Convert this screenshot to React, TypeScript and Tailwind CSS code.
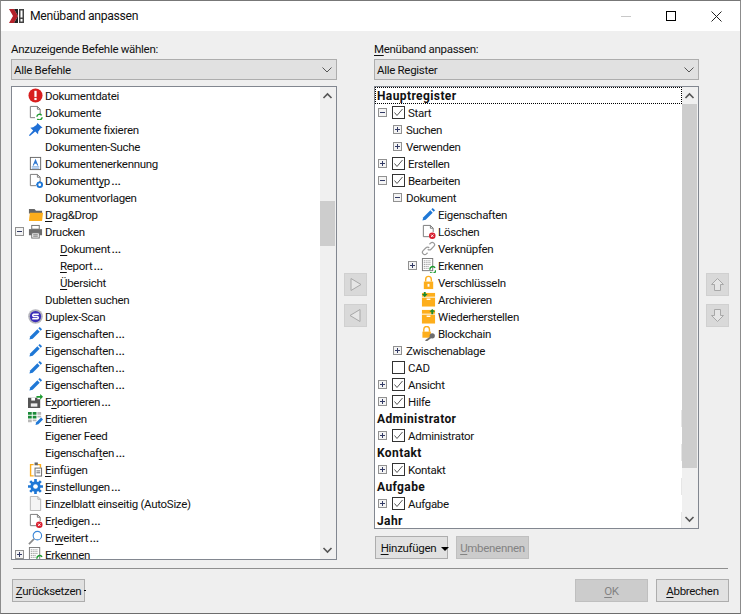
import type { ReactNode } from "react";

type IconName =
  | "error" | "docSync" | "pin" | "docA" | "docGear" | "folder" | "printer" | "scan"
  | "pencil" | "export" | "grid" | "paste" | "gear" | "page" | "docDel" | "search"
  | "gridSync" | "link" | "lock" | "boxIn" | "boxOut" | "lockKey";

// kleine Icons, von Hand nachgezeichnet
function Icon({ name }: { name: IconName }) {
  const shapes: Record<IconName, ReactNode> = {
    error: (
      <>
        <circle cx="8" cy="8" r="7.500" fill="#d81e1e" />
        <rect x="6.800" y="3" width="2.400" height="6.500" fill="#fff" />
        <rect x="6.800" y="10.500" width="2.400" height="2.400" fill="#fff" />
      </>
    ),
    docSync: (
      <>
        <path d="M2.500 1.500h7.500l3 3v5M2.500 1.500v12h5" fill="none" stroke="#777" />
        <path d="M10 1.500v3h3" fill="none" stroke="#777" />
        <path d="M9.500 12.500a2.800 2.800 0 0 1 5-1.500M15 13a2.800 2.800 0 0 1-5 1.800" fill="none" stroke="#1c9a2e" strokeWidth="1.500" />
      </>
    ),
    pin: <path d="M10 1l5.500 5-2 .6-2.500 3.400-.3 3-3-3L2 15l-1-1 4.500-5-3-3 3-.3 3.500-2.500z" fill="#1f6fd6" />,
    docA: (
      <>
        <rect x="2.500" y="1.500" width="11" height="13" fill="#fff" stroke="#666" />
        <path d="M8 3l3 7H9.700L9 8.300H7L6.300 10H5z" fill="#2f78d0" />
        <path d="M4 11.500h8M4 13h8" stroke="#7aa6dc" />
      </>
    ),
    docGear: (
      <>
        <path d="M2.500 1.500h7.500l3 3v5M2.500 1.500v12h6" fill="none" stroke="#777" />
        <path d="M10 1.500v3h3" fill="none" stroke="#777" />
        <circle cx="12.500" cy="12.500" r="2.500" fill="none" stroke="#1f78d6" strokeWidth="2" />
        <path d="M12.500 8.500v8M8.500 12.500h8" stroke="#1f78d6" strokeDasharray="1.500 5" />
      </>
    ),
    folder: (
      <>
        <path d="M1 2h6l1.500 2H15v3H1z" fill="#666" />
        <path d="M1 15l1-9h14l-1 9z" fill="#fdae1c" />
      </>
    ),
    printer: (
      <>
        <rect x="4" y="1.500" width="8" height="4" fill="#fff" stroke="#6d6d6d" />
        <rect x="1" y="5.500" width="14" height="6.500" fill="#6d6d6d" />
        <rect x="4" y="9.500" width="8" height="5.500" fill="#fff" stroke="#6d6d6d" />
        <path d="M5.500 11.500h5M5.500 13h5" stroke="#6d6d6d" />
      </>
    ),
    scan: (
      <>
        <circle cx="8" cy="8" r="7.800" fill="#b4b4bb" />
        <circle cx="8" cy="8" r="6" fill="#3a2db8" />
        <path d="M11.500 5.500H6a1.300 1.300 0 0 0 0 2.500h4a1.300 1.300 0 0 1 0 2.500H4.500" fill="none" stroke="#fff" strokeWidth="1.600" />
      </>
    ),
    pencil: (
      <>
        <path d="M1.500 14.500l1-3.500 7.500-7.500 2.500 2.500L5 13.500z" fill="#1f78d6" />
        <path d="M11 2.500l1.500-1.500 2.500 2.500-1.500 1.500z" fill="#1f78d6" />
      </>
    ),
    export: (
      <>
        <path d="M0 4h10v1.500h3V15H0z" fill="#555" />
        <rect x="3" y="10" width="7" height="3.500" fill="#efefef" />
        <rect x="3.500" y="4" width="4" height="3" fill="#fff" />
        <path d="M9 2h4V0l3 3-3 3V4H9z" fill="#1c9a2e" />
      </>
    ),
    grid: (
      <>
        <path d="M0 1h4v3H0zM5 1h4v3H5zM0 5h4v3H0zM5 5h4v3H5z" fill="#1c8a3a" />
        <path d="M10 1h4v3h-4zM10 5h4v2h-4zM0 9h4v3H0zM5 9h4v2H5z" fill="#b8b8b8" />
        <path d="M8 15l.8-3L14 7l2 2-5 5z" fill="#1f78d6" />
      </>
    ),
    paste: (
      <>
        <path d="M2 2h4v1.500H3.500V14H6v1.500H2z" fill="#fdae1c" />
        <path d="M10 2h4v4h-1.500V3.500H10z" fill="#fdae1c" />
        <rect x="7" y="0.500" width="3.500" height="3" fill="#666" />
        <rect x="7.500" y="6.500" width="7" height="8.500" fill="#fff" stroke="#666" />
        <path d="M9 9.500h4M9 11.500h4" stroke="#666" />
      </>
    ),
    gear: (
      <>
        <circle cx="8" cy="8" r="5.500" fill="#1f78d6" />
        <path d="M8 0v16M0 8h16M2.300 2.300l11.400 11.400M13.700 2.300L2.300 13.700" stroke="#1f78d6" strokeWidth="2.800" />
        <circle cx="8" cy="8" r="2.500" fill="#fff" />
      </>
    ),
    page: (
      <>
        <path d="M2.500 .5h8l3 3v12h-11z" fill="#f4f4f4" stroke="#b4b4b4" />
        <path d="M10.500 .5v3h3" fill="none" stroke="#b4b4b4" />
      </>
    ),
    docDel: (
      <>
        <path d="M2.500 1.500h7.500l3 3v4M2.500 1.500v12h6" fill="none" stroke="#777" />
        <path d="M10 1.500v3h3" fill="none" stroke="#777" />
        <circle cx="12" cy="12.500" r="3.500" fill="#d81e2e" />
        <path d="M10.700 11.200l2.600 2.600M13.300 11.200l-2.600 2.600" stroke="#fff" />
      </>
    ),
    search: (
      <>
        <circle cx="10" cy="6" r="4.500" fill="none" stroke="#3a86d8" strokeWidth="1.200" />
        <path d="M1 15l5.500-5.500" stroke="#8a8a8a" strokeWidth="1.800" />
      </>
    ),
    gridSync: (
      <>
        <rect x="1.500" y="0.500" width="11" height="13" fill="#fff" stroke="#777" />
        <path d="M3 3h8M3 5h8M3 7h8M3 9h6M3 11h5" stroke="#777" strokeDasharray="1 1" />
        <path d="M9.500 12.500a3 3 0 0 1 5.500-2M15.500 13a3 3 0 0 1-5.500 2" fill="none" stroke="#1c9a2e" strokeWidth="1.500" />
      </>
    ),
    link: (
      <>
        <path d="M9 3.500l1.200-1.200a2.400 2.400 0 0 1 3.500 3.500l-3 3a2.400 2.400 0 0 1-3.500 0" fill="none" stroke="#9a9a9a" strokeWidth="1.300" />
        <path d="M7 12.500l-1.200 1.200a2.400 2.400 0 0 1-3.500-3.500l3-3a2.400 2.400 0 0 1 3.500 0" fill="none" stroke="#9a9a9a" strokeWidth="1.300" />
      </>
    ),
    lock: (
      <>
        <path d="M5 7V4.500a3 3 0 0 1 6 0V7" fill="none" stroke="#fdae1c" strokeWidth="1.500" />
        <rect x="3" y="7" width="10" height="8" fill="#fdae1c" />
        <rect x="7" y="9.500" width="2" height="3" fill="#fff" />
      </>
    ),
    boxIn: (
      <>
        <rect x="1" y="1" width="14" height="14.500" fill="#fdae1c" />
        <rect x="1" y="5" width="14" height="1" fill="#fff" />
        <rect x="6" y="7" width="4" height="1.500" fill="#fff" />
        <path d="M3 0h2v2h2L4 5.500 1 2h2z" fill="#1c8a2e" />
      </>
    ),
    boxOut: (
      <>
        <rect x="1" y="1" width="14" height="14.500" fill="#fdae1c" />
        <rect x="1" y="5" width="14" height="1" fill="#fff" />
        <rect x="6" y="7" width="4" height="1.500" fill="#fff" />
        <path d="M11 5.500V3H9l3-3 3 3h-2v2.500z" fill="#1c8a2e" />
      </>
    ),
    lockKey: (
      <>
        <path d="M3 6V3.500a3 3 0 0 1 6 0V6" fill="none" stroke="#fdae1c" strokeWidth="1.500" />
        <rect x="1.500" y="6" width="9" height="6.500" fill="#fdae1c" />
        <circle cx="12" cy="10.500" r="2.800" fill="#6d6d6d" />
        <path d="M10.500 12L5 16" stroke="#6d6d6d" strokeWidth="2" />
      </>
    ),
  };
  return (
    <svg width="15" height="15" viewBox="0 0 16 16" className="shrink-0">
      {shapes[name]}
    </svg>
  );
}

// "&" markiert den unterstrichenen Buchstaben, die Auslassungspunkte sind im Original breiter
function Mnemonic({ text }: { text: string }) {
  const dots = text.endsWith("…");
  const body = dots ? text.slice(0, -1) : text;
  const i = body.indexOf("&");
  return (
    <>
      {i < 0 ? (
        body
      ) : (
        <>
          {body.slice(0, i)}
          <u className="underline underline-offset-2">{body[i + 1]}</u>
          {body.slice(i + 2)}
        </>
      )}
      {dots && <span className="pl-[1px] text-[15px] leading-none">…</span>}
    </>
  );
}

function Expander({ open }: { open: boolean }) {
  return (
    <span className="relative h-[9px] w-[9px] shrink-0 border border-[#919191] bg-[#f4f4f4]">
      <span className="absolute left-[1px] top-[3px] h-px w-[5px] bg-[#333b66]" />
      {!open && <span className="absolute left-[3px] top-[1px] h-[5px] w-px bg-[#333b66]" />}
    </span>
  );
}

function Check({ checked }: { checked: boolean }) {
  return (
    <span className="flex h-[13px] w-[13px] shrink-0 items-center justify-center border border-[#333] bg-white">
      {checked && (
        <svg width="11" height="11" viewBox="0 0 11 11">
          <path d="M1.500 5.500l2.500 3 5.500-6.500" fill="none" stroke="#555" />
        </svg>
      )}
    </span>
  );
}

type LeftRow = { label: string; icon?: IconName; exp?: boolean; sub?: boolean; plus?: boolean };

const leftRows: LeftRow[] = [
  { label: "Dokumentdatei", icon: "error" },
  { label: "Dokumente", icon: "docSync" },
  { label: "Dokumente fixieren", icon: "pin" },
  { label: "Dokumenten-Suche" },
  { label: "Dokumentenerkennung", icon: "docA" },
  { label: "Dokumentt&yp…", icon: "docGear" },
  { label: "Dokumentvorlagen" },
  { label: "&Drag+Drop", icon: "folder" },
  { label: "Drucken", icon: "printer", exp: true },
  { label: "&Dokument…", sub: true },
  { label: "&Report…", sub: true },
  { label: "&Übersicht", sub: true },
  { label: "Dubletten suchen" },
  { label: "Duplex-Scan", icon: "scan" },
  { label: "Eigenschaften…", icon: "pencil" },
  { label: "Eigenschaften…", icon: "pencil" },
  { label: "Eigenschaften…", icon: "pencil" },
  { label: "Eigenschaften…", icon: "pencil" },
  { label: "E&xportieren…", icon: "export" },
  { label: "&Editieren", icon: "grid" },
  { label: "Eigener Feed" },
  { label: "Eigenschaf&ten…" },
  { label: "&Einfügen", icon: "paste" },
  { label: "&Einstellungen…", icon: "gear" },
  { label: "Einzelblatt einseitig (AutoSize)", icon: "page" },
  { label: "Er&ledigen…", icon: "docDel" },
  { label: "Er&weitert…", icon: "search" },
  { label: "Erkennen", icon: "gridSync", plus: true },
];

type TreeRow =
  | { kind: "head"; label: string }
  | { kind: "check"; label: string; open?: boolean; checked: boolean; noExp?: boolean }
  | { kind: "group"; label: string; open?: boolean }
  | { kind: "cmd"; label: string; icon: IconName; plus?: boolean };

const treeRows: TreeRow[] = [
  { kind: "head", label: "Hauptregister" },
  { kind: "check", label: "Start", open: true, checked: true },
  { kind: "group", label: "Suchen" },
  { kind: "group", label: "Verwenden" },
  { kind: "check", label: "Erstellen", checked: true },
  { kind: "check", label: "Bearbeiten", open: true, checked: true },
  { kind: "group", label: "Dokument", open: true },
  { kind: "cmd", label: "Eigenschaften", icon: "pencil" },
  { kind: "cmd", label: "Löschen", icon: "docDel" },
  { kind: "cmd", label: "Verknüpfen", icon: "link" },
  { kind: "cmd", label: "Erkennen", icon: "gridSync", plus: true },
  { kind: "cmd", label: "Verschlüsseln", icon: "lock" },
  { kind: "cmd", label: "Archivieren", icon: "boxIn" },
  { kind: "cmd", label: "Wiederherstellen", icon: "boxOut" },
  { kind: "cmd", label: "Blockchain", icon: "lockKey" },
  { kind: "group", label: "Zwischenablage" },
  { kind: "check", label: "CAD", checked: false, noExp: true },
  { kind: "check", label: "Ansicht", checked: true },
  { kind: "check", label: "Hilfe", checked: true },
  { kind: "head", label: "Administrator" },
  { kind: "check", label: "Administrator", checked: true },
  { kind: "head", label: "Kontakt" },
  { kind: "check", label: "Kontakt", checked: true },
  { kind: "head", label: "Aufgabe" },
  { kind: "check", label: "Aufgabe", checked: true },
  { kind: "head", label: "Jahr" },
];

function Scrollbar({ thumbTop, thumbHeight }: { thumbTop: number; thumbHeight: number }) {
  return (
    <div className="relative w-[16px] shrink-0 bg-[#f0f0f0]">
      <svg width="15" height="17" viewBox="0 0 15 17" className="absolute left-0 top-0">
        <path d="M3.500 11l4-4 4 4" fill="none" stroke="#555" strokeWidth="1.600" />
      </svg>
      <div
        className="absolute left-0 right-[1px] bg-[#cdcdcd]"
        style={{ top: thumbTop, height: thumbHeight }}
      />
      <svg width="15" height="17" viewBox="0 0 15 17" className="absolute bottom-0 left-0">
        <path d="M3.500 6l4 4 4-4" fill="none" stroke="#555" strokeWidth="1.600" />
      </svg>
    </div>
  );
}

function Combo({ text }: { text: string }) {
  return (
    <div className="flex h-[21px] items-center justify-between border border-[#adadad] bg-[#e1e1e1] pl-[2px] pr-[4px]">
      <span className="pt-[2px]">{text}</span>
      <svg width="10" height="6" viewBox="0 0 10 6">
        <path d="M.5 .5L5 5l4.500-4.500" fill="none" stroke="#555" />
      </svg>
    </div>
  );
}

function Btn({ label, disabled, caret, w }: { label: string; disabled?: boolean; caret?: boolean; w: string }) {
  return (
    <div
      className={`relative flex h-[23px] items-center justify-center border ${w} ${
        disabled ? "border-[#bfbfbf] bg-[#cccccc] text-[#838383]" : "border-[#adadad] bg-[#e1e1e1]"
      }`}
    >
      <span className={caret ? "pr-[6px] pt-[2px]" : "pt-[2px]"}>
        <Mnemonic text={label} />
      </span>
      {caret && <span className="absolute right-[-2px] top-[10px] h-0 w-0 border-x-[4px] border-t-[4px] border-x-transparent border-t-black" />}
    </div>
  );
}

function ArrowBtn({ d }: { d: string }) {
  return (
    <div className="flex h-[23px] w-[23px] items-center justify-center border border-[#d0d0d0] bg-[#d9d9d9]">
      <svg width="15" height="15" viewBox="0 0 15 15">
        <path d={d} fill="#e6e6e6" stroke="#a8a8a8" />
      </svg>
    </div>
  );
}

export default function App() {
  return (
    <div className="flex h-[614px] w-[741px] flex-col overflow-hidden border-x border-b border-t border-x-[#8c8c8c] border-b-[#6d6d6d] border-t-[#777] bg-[#efefef] font-['Roboto',sans-serif] text-[11.5px] leading-[17px] tracking-[-0.3px] text-[#111]">
      <div className="flex h-[30px] shrink-0 items-center bg-white pl-[8px]">
        <svg width="16" height="16" viewBox="0 0 16 16" className="shrink-0">
          <path d="M0 1h5l4 7-4 7H0l4-7z" fill="#b3222a" />
          <path d="M5 1h4v14H5l4-7z" fill="#222" />
          <rect x="10" y="1" width="5" height="14" fill="#444" />
          <rect x="11.500" y="2.500" width="2" height="7" fill="#fff" />
          <rect x="11.500" y="11" width="2" height="2.500" fill="#fff" />
        </svg>
        <span className="ml-[5px] flex-1 pt-[1px] text-[12.2px]">Menüband anpassen</span>
        <div className="mr-[18px] flex items-center gap-[35px]">
          <span className="h-px w-[10px] bg-[#c8c8c8]" />
          <span className="h-[10px] w-[10px] border border-black" />
          <svg width="11" height="11" viewBox="0 0 11 11">
            <path d="M.5 .5l10 10M10.500 .5l-10 10" stroke="#222" />
          </svg>
        </div>
      </div>

      <div className="flex flex-1 flex-col pl-[10px] pr-[11px] pt-[8px]">
        <div className="flex gap-[7px]">
          <div className="flex w-[326px] shrink-0 flex-col">
            <div className="mb-[2px] h-[17px] pt-[2px]">Anzuzeigende Befehle wählen:</div>
            <div className="mt-[1px]">
              <Combo text="Alle Befehle" />
            </div>
            <div className="mt-[6px] flex h-[474px] border border-[#828790] bg-white">
              <div className="min-w-0 flex-1 overflow-hidden">
                {leftRows.map((r, i) => (
                  <div key={i} className="flex h-[17px] items-center whitespace-nowrap">
                    <span className="flex w-[16px] shrink-0 justify-end pr-[4px]">
                      {r.exp ? <Expander open /> : r.plus ? <Expander open={false} /> : null}
                    </span>
                    <span className="flex w-[17px] shrink-0">{r.icon && <Icon name={r.icon} />}</span>
                    <span className={r.sub ? "pl-[15px] pt-[2px]" : "pt-[2px]"}>
                      {r.label.includes("+") ? (
                        <>
                          <u className="underline underline-offset-2">D</u>rag&amp;Drop
                        </>
                      ) : (
                        <Mnemonic text={r.label} />
                      )}
                    </span>
                  </div>
                ))}
              </div>
              <Scrollbar thumbTop={114} thumbHeight={45} />
            </div>
          </div>

          <div className="flex w-[23px] shrink-0 flex-col gap-[8px] pt-[234px]">
            <ArrowBtn d="M3 1.500l10 6-10 6z" />
            <ArrowBtn d="M12 1.500l-10 6 10 6z" />
          </div>

          <div className="flex w-[325px] shrink-0 flex-col">
            <div className="mb-[2px] h-[17px] pt-[2px]">
              <Mnemonic text="&Menüband anpassen:" />
            </div>
            <div className="mt-[1px]">
              <Combo text="Alle Register" />
            </div>
            <div className="mt-[6px] flex h-[443px] border border-[#828790] bg-white">
              <div className="min-w-0 flex-1 overflow-hidden">
                {treeRows.map((r, i) => {
                  if (r.kind === "head") {
                    return (
                      <div
                        key={i}
                        className={`flex h-[17px] items-center text-[12px] font-bold tracking-[0.4px] ${
                          i === 0
                            ? "border border-dotted border-black pl-[1px]"
                            : "border-r border-r-[#e6e6e6] pl-[2px]"
                        }`}
                      >
                        <span className={i === 0 ? "pt-[1px]" : "pt-[2px]"}>{r.label}</span>
                      </div>
                    );
                  }
                  if (r.kind === "check") {
                    return (
                      <div key={i} className="flex h-[17px] items-center">
                        <span className="flex w-[17px] shrink-0 justify-end pr-[5px]">
                          {!r.noExp && <Expander open={!!r.open} />}
                        </span>
                        <Check checked={r.checked} />
                        <span className="pl-[3px] pt-[2px]">{r.label}</span>
                      </div>
                    );
                  }
                  if (r.kind === "group") {
                    return (
                      <div key={i} className="flex h-[17px] items-center pl-[18px]">
                        <Expander open={!!r.open} />
                        <span className="pl-[4px] pt-[2px]">{r.label}</span>
                      </div>
                    );
                  }
                  return (
                    <div key={i} className="flex h-[17px] items-center">
                      <span className="flex w-[46px] shrink-0 justify-end pr-[4px]">
                        {r.plus && <Expander open={false} />}
                      </span>
                      <Icon name={r.icon} />
                      <span className="pl-[2px] pt-[2px]">{r.label}</span>
                    </div>
                  );
                })}
              </div>
              <Scrollbar thumbTop={17} thumbHeight={364} />
            </div>
            <div className="mt-[7px] flex gap-[8px] pl-[1px]">
              <Btn label="&Hinzufügen" caret w="w-[73px]" />
              <Btn label="&Umbenennen" disabled w="w-[73px]" />
            </div>
          </div>

          <div className="flex w-[23px] shrink-0 flex-col gap-[8px] pt-[234px]">
            <ArrowBtn d="M7.500 1.500l6 6h-3v6h-6v-6h-3z" />
            <ArrowBtn d="M7.500 13.500l6-6h-3v-6h-6v6h-3z" />
          </div>
        </div>
      </div>

      <div className="mx-[12px] h-px bg-[#8f8f8f]" />
      <div className="flex items-center justify-between pb-[11px] pl-[11px] pr-[11px] pt-[10px]">
        <div className="relative">
          <Btn label="&Zurücksetzen" w="w-[73px]" />
          <span className="absolute left-[72px] top-[11px] h-px w-[2px] bg-black" />
        </div>
        <div className="flex gap-[8px]">
          <Btn label="&OK" disabled w="w-[73px]" />
          <Btn label="&Abbrechen" w="w-[73px]" />
        </div>
      </div>
    </div>
  );
}
